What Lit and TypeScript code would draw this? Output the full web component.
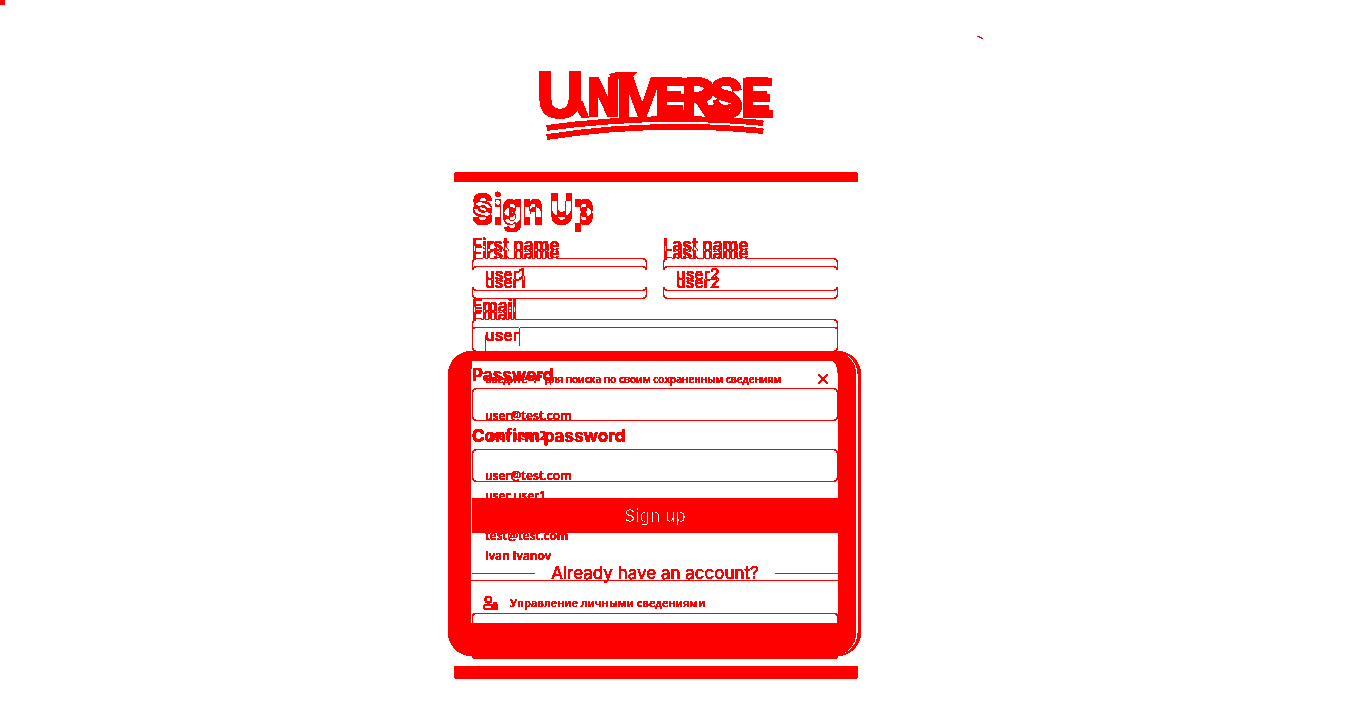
import { LitElement, html, css } from "lit";
import { customElement } from "lit/decorators.js";

const SAVED = [
  { email: "user@test.com", name: "user user2" },
  { email: "user@test.com", name: "user user1" },
  { email: "test@test.com", name: "Ivan Ivanov" },
];

@customElement("app-root")
export class AppRoot extends LitElement {
  static styles = css`
    :host {
      display: block;
      --ink: #ff0000;
      font-family: Inter, "Open Sans", sans-serif;
      font-size: 16px;
      color: var(--ink);
    }
    * { box-sizing: border-box; }
    .defs { position: absolute; width: 0; height: 0; }
    .page {
      position: relative;
      min-height: 100vh;
      padding-right: 54px;
      background: #fff;
      filter: url(#hard);
      display: flex;
      flex-direction: column;
      align-items: center;
      overflow: hidden;
    }
    .chip { position: absolute; left: 0; top: 0; width: 5px; height: 5px; background: var(--ink); }
    .speck { position: absolute; left: 977px; top: 36px; }
    .brand { padding: 64px 0 28px; height: 172px; }
    .brand svg { display: block; }
    .logo { font-family: "Liberation Mono", monospace; font-weight: 400; fill: var(--ink); stroke: var(--ink); stroke-width: 4; }
    .sans { font-family: "Liberation Sans", sans-serif; }
    .heavy { font-weight: 700; stroke-width: 2; }
    .echo { stroke-width: 1; }
    .card {
      position: relative;
      width: 100%;
      max-width: 404px;
      border-top: 10px solid var(--ink);
      border-bottom: 13px solid var(--ink);
      border-radius: 4px;
      padding: 4px 20px 7px 18px;
      display: grid;
    }
    .layer { grid-area: 1 / 1; min-width: 0; }
    .second { padding-top: 8px; }
    h1 { margin: 0 0 9px; font-size: 32px; line-height: 40px; font-weight: 800; }
    .row { display: grid; grid-template-columns: 1fr 1fr; gap: 16px; }
    .field { position: relative; display: block; margin-bottom: 5px; }
    .label { display: block; line-height: 21px; margin-bottom: 2px; font-size: 17px; font-weight: 700; white-space: nowrap; }
    input {
      display: block;
      width: 100%;
      height: 33px;
      padding: 0 12px 2px;
      border: 1px solid currentColor;
      border-radius: 4px;
      background: transparent;
      color: inherit;
      font: inherit;
      font-weight: 500;
      outline: none;
    }
    .shift { color: #0ff; mix-blend-mode: difference; }
    .open-sides { border-left-color: transparent; border-right-color: transparent; border-bottom-color: transparent; }
    .caret { position: absolute; left: 47px; bottom: 6px; width: 1px; height: 19px; background: var(--ink); }
    .caret.start { left: 13px; }
    button { font: inherit; color: inherit; cursor: pointer; padding: 0; }
    .submit {
      display: block;
      width: 100%;
      height: 35px;
      margin-top: 16px;
      border: 0;
      border-radius: 2px;
      background: var(--ink);
      color: #fff;
      font-size: 17px;
      font-weight: 500;
    }
    .divider { display: flex; align-items: center; gap: 16px; height: 20px; margin: 30px 0; white-space: nowrap; font-size: 17px; }
    .divider::before, .divider::after { content: ""; flex: 1; height: 1px; background: var(--ink); }
    .login { display: block; width: 100%; height: 46px; border: 1px solid var(--ink); border-bottom-width: 3px; border-radius: 4px; background: transparent; }
    .menu {
      position: absolute;
      left: -6px;
      right: 2px;
      top: 169px;
      height: 305px;
      border: solid var(--ink);
      border-width: 10px 18px 33px 23px;
      border-radius: 24px;
      box-shadow: 2px 0 0 #fff, 5px 0 0 var(--ink);
      font: 600 12px/20px "Open Sans", sans-serif;
      display: flex;
      flex-direction: column;
      pointer-events: none;
    }
    .hint { display: flex; align-items: center; justify-content: space-between; height: 36px; padding: 0 10px 0 14px; font-size: 10px; white-space: nowrap; }
    ul { list-style: none; margin: 9px 0 14px; padding: 0 14px; display: grid; gap: 20px; }
    .mail, .who { display: block; }
    .manage { flex: 1; display: flex; align-items: center; gap: 12px; padding: 2px 12px 0; border-top: 1px solid var(--ink); font-size: 11px; }
  `;

  private field(label: string, value = "", layer = "", extra = "", type = "text") {
    return html`<label class="field">
      <span class="label ${layer}">${label}</span>
      <input class="${layer} ${extra}" type=${type} .value=${value} />
      ${label === "Email" ? html`<span class="caret ${layer ? "start" : ""}"></span>` : ""}
    </label>`;
  }

  render() {
    return html`
      <svg class="defs" aria-hidden="true">
        <filter id="hard" x="0" y="0" width="100%" height="100%" color-interpolation-filters="sRGB">
          <feComponentTransfer>
            <feFuncG type="discrete" tableValues="0 0 0 0 0 0 0 0 1"></feFuncG>
            <feFuncB type="discrete" tableValues="0 0 0 0 0 0 0 0 1"></feFuncB>
          </feComponentTransfer>
        </filter>
      </svg>
      <main class="page">
        <span class="chip"></span>
        <svg class="speck" width="6" height="3"><path d="M0 0h3v1h2v1h1v1H4V2H2V1H0z" fill="red" /></svg>
        <header class="brand">
          <svg width="240" height="80" viewBox="536 64 240 80" role="img" aria-label="Universe">
            <g class="logo">
              <text class="sans heavy" x="537" y="117" font-size="64">U</text>
              <path d="M576 104l7 12h3l-5-13z" />
              <text x="587" y="115" font-size="54">N</text>
              <text class="sans" x="616" y="116" font-size="56">I</text>
              <path d="M611 75l8-2h16l-3 3-6 2h-14z" stroke-width="2" />
              <text x="626" y="115" font-size="54">V</text>
              <text x="655 682 710 741" y="116" font-size="54">ERSE</text>
              <text class="echo" x="657 684 712 743" y="109" font-size="46">ERSE</text>
            </g>
            <path d="M547 128Q655 113 763 123M547 137Q655 120 763 131" fill="none" stroke="red" stroke-width="5" />
          </svg>
        </header>
        <section class="card">
          <div class="layer">
            <h1>Sign Up</h1>
            <div class="row">${this.field("First name", "user1")}${this.field("Last name", "user2")}</div>
            ${this.field("Email", "user")}
          </div>
          <div class="menu">
            <div class="hint">
              <span>Введите "/" для поиска по своим сохраненным сведениям</span>
              <svg width="10" height="10" viewBox="0 0 10 10" stroke="red" stroke-width="1.5"><path d="M0 0l10 10M10 0L0 10" /></svg>
            </div>
            <ul>
              ${SAVED.map((s) => html`<li><span class="mail">${s.email}</span><span class="who">${s.name}</span></li>`)}
            </ul>
            <div class="manage">
              <svg width="15" height="15" viewBox="0 0 15 15" fill="none" stroke="red" stroke-width="1.5">
                <rect x="2.5" y="1" width="5.5" height="5.5" rx="1.5" /><path d="M8 9H3Q1 9 1 11T4 13H8" /><path d="M8 8h2V6h4v2h1v6H8z" fill="red" stroke="none" />
              </svg>
              <span>Управление личными сведениями</span>
            </div>
          </div>
          <form class="layer second" @submit=${(e: Event) => e.preventDefault()}>
            <h1 class="shift">Sign Up</h1>
            <div class="row">${this.field("First name", "user1", "shift")}${this.field("Last name", "user2", "shift")}</div>
            ${this.field("Email", "", "shift", "open-sides")}
            ${this.field("Password", "", "", "", "password")}
            ${this.field("Confirm password", "", "", "", "password")}
            <button class="submit" type="submit">Sign up</button>
            <div class="divider">Already have an account?</div>
            <button class="login" type="button" aria-label="Log in"></button>
          </form>
        </section>
      </main>
    `;
  }
}
